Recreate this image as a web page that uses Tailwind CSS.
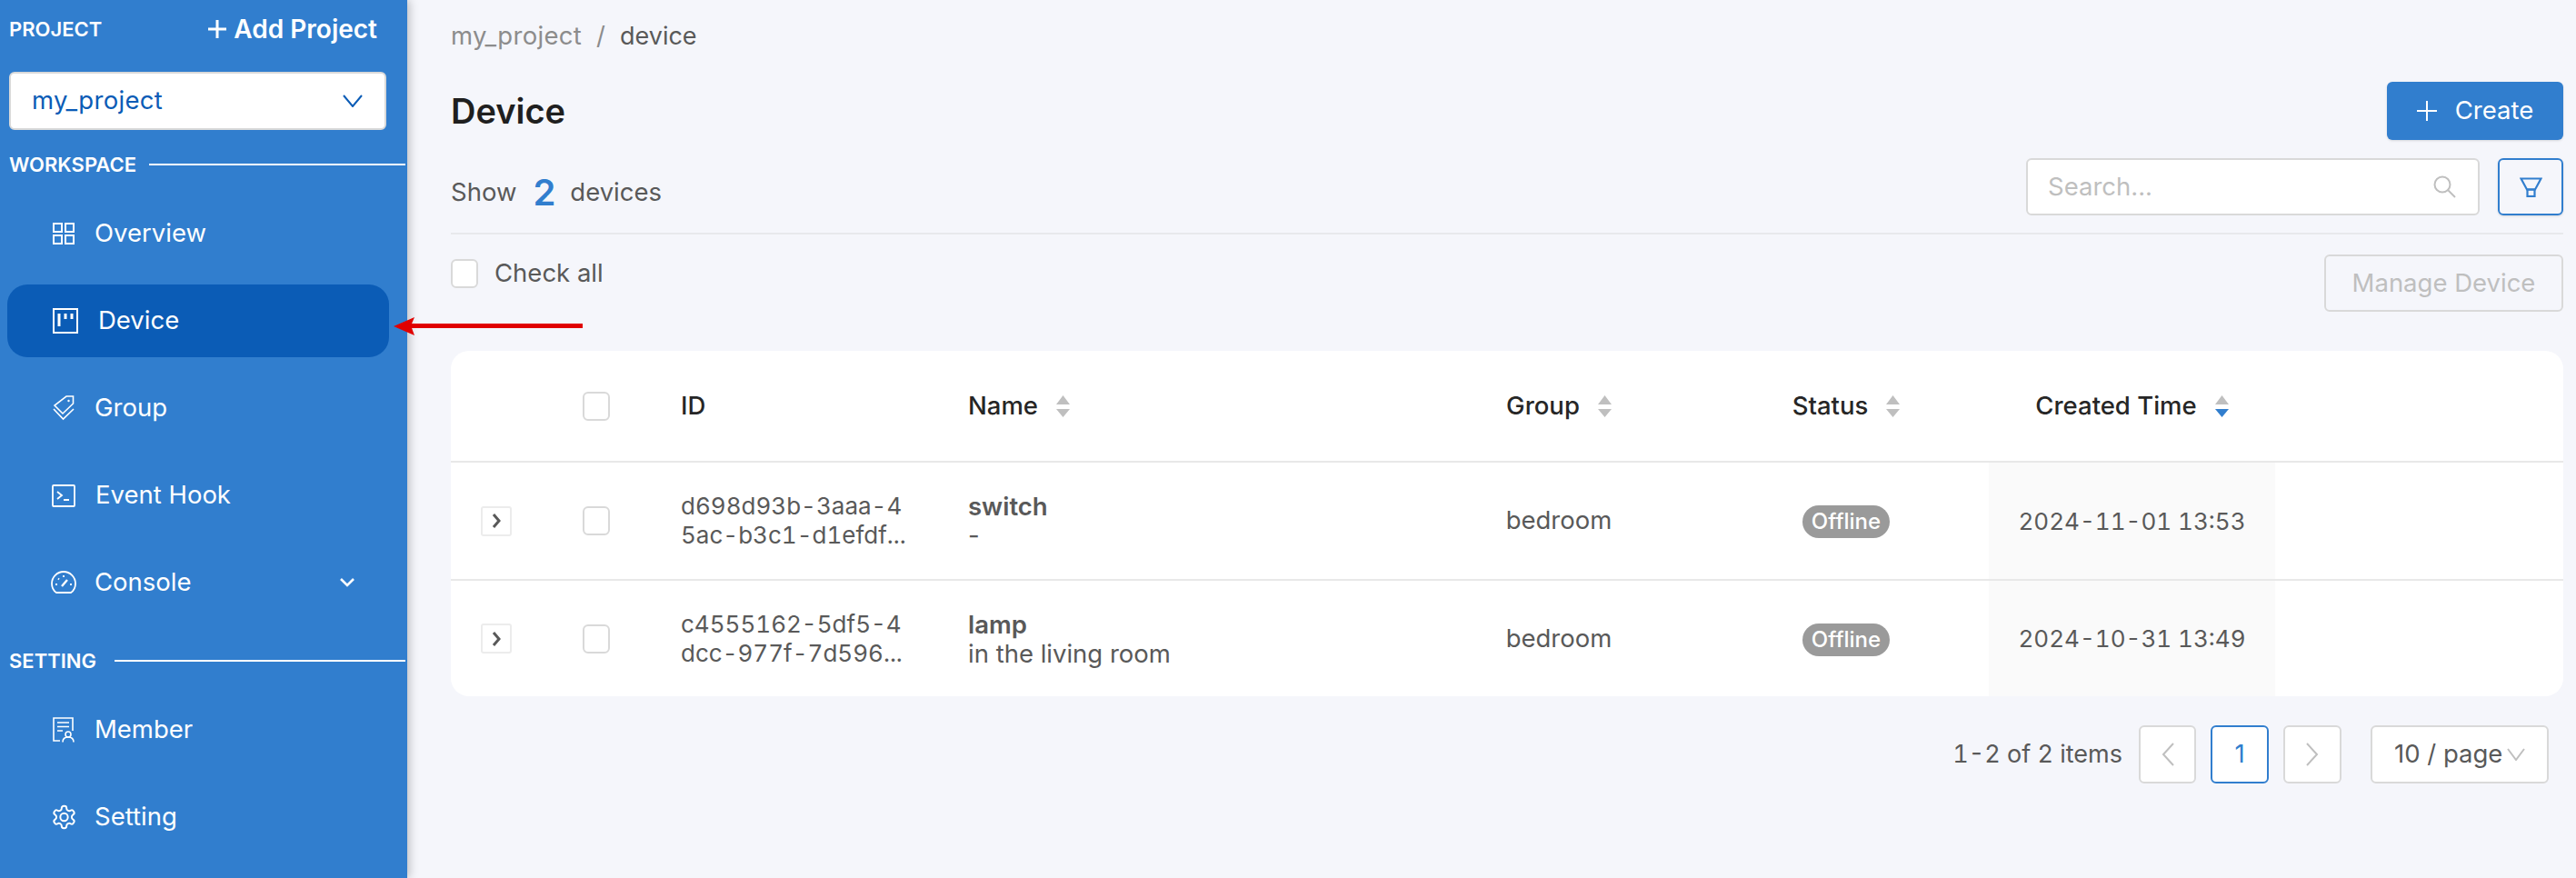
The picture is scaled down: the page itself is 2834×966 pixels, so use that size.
<!DOCTYPE html>
<html lang="en">
  <head>
    <meta charset="UTF-8" />
    <title>Device</title>
    <script src="https://cdn.jsdelivr.net/npm/@tailwindcss/browser@4"></script>
  </head>
  <body class="font-['Inter',sans-serif] antialiased">
    <div class="relative flex w-[2834px] h-[966px] overflow-hidden bg-[#f5f6fb] text-[27.5px] text-[#595959]">
      <!-- Sidebar -->
      <aside class="w-[448px] shrink-0 bg-[#317ece] text-white shadow-[2px_0_10px_rgba(0,0,0,0.25)] z-10">
        <div class="h-[64px] pl-[10px] pr-[33px] flex items-center justify-between">
          <span class="text-[22px] font-semibold">PROJECT</span>
          <span class="flex items-center gap-[6px] text-[28px] font-semibold">
            <svg class="w-[24px] h-[24px]" viewBox="0 0 24 24" fill="none" stroke="currentColor" stroke-width="3"><path d="M12 2v20M2 12h20" /></svg>
            Add Project
          </span>
        </div>
        <div class="mt-[15px] ml-[10px] w-[415px] h-[64px] bg-white border-2 border-[#d9d9d9] rounded-[6px] pl-[23px] pr-[24px] flex items-center justify-between text-[#0b5cb6]">
          <span class="tracking-[0.3px]">my_project</span>
          <svg class="w-[22px] h-[14px]" viewBox="0 0 22 14" fill="none" stroke="currentColor" stroke-width="2"><path d="M1 1l10 12L21 1" /></svg>
        </div>
        <div class="mt-[22px] pl-[10px] pr-[2px] flex items-center gap-[14px] h-[32px] text-[22px] font-semibold">
          <span>WORKSPACE</span>
          <div class="flex-1 h-[2px] bg-white"></div>
        </div>
        <nav class="mt-[12px]">
          <a class="h-[96px] pl-[58px] flex items-center gap-[22px]">
            <svg class="w-[24px] h-[24px]" viewBox="0 0 24 24" fill="none" stroke="currentColor" stroke-width="2"><rect x="1" y="1" width="9" height="9" /><rect x="14" y="1" width="9" height="9" /><rect x="1" y="14" width="9" height="9" /><rect x="14" y="14" width="9" height="9" /></svg>
            Overview
          </a>
          <a class="ml-[8px] mr-[20px] my-[8px] h-[80px] pl-[50px] flex items-center gap-[22px] bg-[#0b5cb6] rounded-[22px]">
            <svg class="w-[28px] h-[28px]" viewBox="0 0 28 28" fill="none" stroke="currentColor" stroke-width="2"><rect x="1" y="1" width="26" height="26" /><path d="M7 6v14M14 6v6M21 6v6" stroke-width="3" /></svg>
            Device
          </a>
          <a class="h-[96px] pl-[58px] flex items-center gap-[22px]">
            <svg class="w-[24px] h-[28px]" viewBox="0 0 24 28" fill="none" stroke="currentColor" stroke-width="1.6"><path d="M15 1h7.5v8L11 20 2 11z" /><circle cx="17.5" cy="6" r="1.2" fill="currentColor" stroke="none" /><path d="M1 15l10.5 11L23 15" /></svg>
            Group
          </a>
          <a class="h-[96px] pl-[57px] flex items-center gap-[22px]">
            <svg class="w-[26px] h-[25px]" viewBox="0 0 26 25" fill="none" stroke="currentColor" stroke-width="1.8"><rect x="1" y="1" width="24" height="23" rx="1" /><path d="M6 8l5 4-5 4M13 17h6" /></svg>
            Event Hook
          </a>
          <a class="h-[96px] pl-[56px] pr-[58px] flex items-center gap-[20px]">
            <svg class="w-[28px] h-[26px]" viewBox="0 0 28 26" fill="none" stroke="currentColor" stroke-width="1.8"><path d="M6 24h16c3-2 5-6 5-10A13 13 0 0 0 1 14c0 4 2 8 5 10z" /><path d="M12 17l6-7" stroke-width="2.4" /><path d="M5 15h2M21 15h2M8 8.5l1 1M14 5v2" stroke-width="1.8" /></svg>
            <span class="flex-1">Console</span>
            <svg class="w-[16px] h-[10px]" viewBox="0 0 16 10" fill="none" stroke="currentColor" stroke-width="2.6"><path d="M1 1l7 7 7-7" /></svg>
          </a>
        </nav>
        <div class="mt-[22px] pl-[10px] pr-[2px] flex items-center gap-[20px] h-[32px] text-[22px] font-semibold">
          <span>SETTING</span>
          <div class="flex-1 h-[2px] bg-white"></div>
        </div>
        <nav class="mt-[12px]">
          <a class="h-[96px] pl-[58px] flex items-center gap-[22px]">
            <svg class="w-[24px] h-[28px]" viewBox="0 0 24 28" fill="none" stroke="currentColor" stroke-width="1.6"><path d="M8 26H1V1h21v14" /><path d="M5 6h13M5 10.5h13M5 15h6" /><circle cx="17" cy="19" r="3" /><path d="M11 27.5c0-4 3-5.500 6-5.500s6 1.500 6 5.500" /></svg>
            Member
          </a>
          <a class="h-[96px] pl-[57px] flex items-center gap-[20px]">
            <svg class="w-[27px] h-[28px]" viewBox="1 1 22 22" fill="none" stroke="currentColor" stroke-width="1.6"><circle cx="12" cy="12" r="3.4" /><path d="M12.22 2h-.44a2 2 0 0 0-2 2v.18a2 2 0 0 1-1 1.73l-.43.25a2 2 0 0 1-2 0l-.15-.08a2 2 0 0 0-2.73.73l-.22.38a2 2 0 0 0 .73 2.73l.15.1a2 2 0 0 1 1 1.72v.51a2 2 0 0 1-1 1.74l-.15.09a2 2 0 0 0-.73 2.73l.22.38a2 2 0 0 0 2.73.73l.15-.08a2 2 0 0 1 2 0l.43.25a2 2 0 0 1 1 1.73V20a2 2 0 0 0 2 2h.44a2 2 0 0 0 2-2v-.18a2 2 0 0 1 1-1.73l.43-.25a2 2 0 0 1 2 0l.15.08a2 2 0 0 0 2.73-.73l.22-.39a2 2 0 0 0-.73-2.73l-.15-.08a2 2 0 0 1-1-1.74v-.5a2 2 0 0 1 1-1.74l.15-.09a2 2 0 0 0 .73-2.73l-.22-.38a2 2 0 0 0-2.73-.73l-.15.08a2 2 0 0 1-2 0l-.43-.25a2 2 0 0 1-1-1.73V4a2 2 0 0 0-2-2z" /></svg>
            Setting
          </a>
        </nav>
      </aside>

      <!-- Main -->
      <main class="flex-1 pl-[48px] pr-[14px]">
        <div class="h-[80px] flex items-center gap-[16px]">
          <span class="text-[#8c8c8c] tracking-[0.3px]">my_project</span>
          <span class="text-[#8c8c8c]">/</span>
          <span class="text-[27px]">device</span>
        </div>
        <div class="h-[84px] flex items-center justify-between">
          <h1 class="text-[38px] font-semibold text-[#1f1f1f]">Device</h1>
          <button class="w-[194px] h-[64px] bg-[#317ece] text-white rounded-[6px] shadow-sm flex items-center justify-center gap-[20px]">
            <svg class="w-[22px] h-[22px]" viewBox="0 0 22 22" fill="none" stroke="currentColor" stroke-width="2"><path d="M11 0v22M0 11h22" /></svg>
            Create
          </button>
        </div>
        <div class="h-[94px] border-b-2 border-[#e8e9ec] flex items-start justify-between">
          <div class="mt-[16px] h-[63px] flex items-center">
            <span>Show</span>
            <span class="ml-[18px] mr-[16px] text-[40px] font-semibold text-[#317ece]">2</span>
            <span>devices</span>
          </div>
          <div class="mt-[10px] flex gap-[20px]">
            <div class="w-[499px] h-[63px] bg-white border-2 border-[#d9d9d9] rounded-[6px] pl-[22px] pr-[24px] flex items-center justify-between text-[#bfbfbf]">
              <span>Search...</span>
              <svg class="w-[25px] h-[25px]" viewBox="0 0 25 25" fill="none" stroke="currentColor" stroke-width="2"><circle cx="10" cy="10" r="8.5" /><path d="M16 16l8 8" /></svg>
            </div>
            <button class="w-[72px] h-[63px] border-2 border-[#317ece] rounded-[6px] shadow-sm flex items-center justify-center text-[#317ece]">
              <svg class="w-[25px] h-[22px]" viewBox="0 0 25 22" fill="none" stroke="currentColor" stroke-width="2.2"><path d="M1.500 1.500h22l-6.500 12H8z" /><rect x="8.500" y="13.500" width="8" height="7.500" /></svg>
            </button>
          </div>
        </div>
        <div class="h-[128px] flex items-start justify-between">
          <label class="mt-[27px] h-[32px] flex items-center gap-[18px]">
            <span class="w-[30px] h-[32px] bg-white border-2 border-[#d9d9d9] rounded-[6px]"></span>
            <span>Check all</span>
          </label>
          <button class="mt-[22px] w-[263px] h-[63px] border-2 border-[#d9d9d9] rounded-[6px] text-[#bfbfbf]">Manage Device</button>
        </div>

        <!-- Table -->
        <div class="h-[380px] bg-white rounded-[20px] overflow-hidden">
          <table class="w-full table-fixed border-collapse">
            <thead>
              <tr class="h-[122px] border-b-2 border-[#e8e8e8] text-[#262626]">
                <th class="w-[112px]"></th>
                <th class="w-[108px] pl-[33px] font-medium text-left"><span class="block w-[30px] h-[32px] border-2 border-[#d9d9d9] rounded-[6px]"></span></th>
                <th class="w-[316px] pl-[33px] font-medium text-left">ID</th>
                <th class="w-[524px] pl-[33px] font-medium text-left">
                  <span class="inline-flex items-center gap-[20px]">Name
                    <svg class="w-[15px] h-[24px]" viewBox="0 0 15 24" fill="#bfbfbf"><path d="M7.500 0L15 10H0zM0 15h15L7.500 24z" /></svg>
                  </span>
                </th>
                <th class="w-[318px] font-medium">
                  <span class="inline-flex items-center gap-[20px]">Group
                    <svg class="w-[15px] h-[24px]" viewBox="0 0 15 24" fill="#bfbfbf"><path d="M7.500 0L15 10H0zM0 15h15L7.500 24z" /></svg>
                  </span>
                </th>
                <th class="w-[314px] font-medium">
                  <span class="inline-flex items-center gap-[20px]">Status
                    <svg class="w-[15px] h-[24px]" viewBox="0 0 15 24" fill="#bfbfbf"><path d="M7.500 0L15 10H0zM0 15h15L7.500 24z" /></svg>
                  </span>
                </th>
                <th class="w-[315px] font-medium">
                  <span class="inline-flex items-center gap-[20px]">Created Time
                    <svg class="w-[15px] h-[24px]" viewBox="0 0 15 24"><path fill="#bfbfbf" d="M7.500 0L15 10H0z" /><path fill="#317ece" d="M0 15h15L7.500 24z" /></svg>
                  </span>
                </th>
                <th></th>
              </tr>
            </thead>
            <tbody>
              <tr class="h-[130px] border-b-2 border-[#e8e8e8]">
                <td class="pl-[33px]">
                  <span class="w-[34px] h-[33px] border-2 border-[#ececec] rounded-[3px] flex items-center justify-center">
                    <svg class="w-[10px] h-[16px]" viewBox="0 0 10 16" fill="none" stroke="#595959" stroke-width="3"><path d="M2 1l6 7-6 7" /></svg>
                  </span>
                </td>
                <td class="pl-[33px]"><span class="block w-[30px] h-[32px] border-2 border-[#d9d9d9] rounded-[6px]"></span></td>
                <td class="pl-[33px] leading-[32px] text-[26px] tabular-nums">d698d93b-3aaa-4<br />5ac-b3c1-d1efdf...</td>
                <td class="pl-[33px] leading-[32px]"><div class="font-semibold">switch</div><div>-</div></td>
                <td class="text-center">bedroom</td>
                <td class="text-center"><span class="inline-block w-[96px] h-[36px] leading-[36px] rounded-full bg-[#9a9a9a] text-white text-[24px] font-medium">Offline</span></td>
                <td class="text-center bg-[#fafafa] text-[26px] tabular-nums">2024-11-01 13:53</td>
                <td></td>
              </tr>
              <tr class="h-[128px]">
                <td class="pl-[33px]">
                  <span class="w-[34px] h-[33px] border-2 border-[#ececec] rounded-[3px] flex items-center justify-center">
                    <svg class="w-[10px] h-[16px]" viewBox="0 0 10 16" fill="none" stroke="#595959" stroke-width="3"><path d="M2 1l6 7-6 7" /></svg>
                  </span>
                </td>
                <td class="pl-[33px]"><span class="block w-[30px] h-[32px] border-2 border-[#d9d9d9] rounded-[6px]"></span></td>
                <td class="pl-[33px] leading-[32px] text-[26px] tabular-nums">c4555162-5df5-4<br />dcc-977f-7d596...</td>
                <td class="pl-[33px] leading-[32px]"><div class="font-semibold">lamp</div><div>in the living room</div></td>
                <td class="text-center">bedroom</td>
                <td class="text-center"><span class="inline-block w-[96px] h-[36px] leading-[36px] rounded-full bg-[#9a9a9a] text-white text-[24px] font-medium">Offline</span></td>
                <td class="text-center bg-[#fafafa] text-[26px] tabular-nums">2024-10-31 13:49</td>
                <td></td>
              </tr>
            </tbody>
          </table>
        </div>

        <!-- Pagination -->
        <div class="mt-[32px] pr-[16px] flex items-center justify-end">
          <span class="mr-[18px] text-[27px] tabular-nums">1-2 of 2 items</span>
          <span class="w-[63px] h-[64px] bg-white border-2 border-[#d9d9d9] rounded-[6px] flex items-center justify-center">
            <svg class="w-[14px] h-[26px]" viewBox="0 0 14 26" fill="none" stroke="#bfbfbf" stroke-width="2"><path d="M13 1L2 13l11 12" /></svg>
          </span>
          <span class="ml-[16px] w-[64px] h-[64px] bg-white border-2 border-[#317ece] rounded-[6px] flex items-center justify-center text-[#317ece]">1</span>
          <span class="ml-[16px] w-[64px] h-[64px] bg-white border-2 border-[#d9d9d9] rounded-[6px] flex items-center justify-center">
            <svg class="w-[14px] h-[26px]" viewBox="0 0 14 26" fill="none" stroke="#bfbfbf" stroke-width="2"><path d="M1 1l11 12L1 25" /></svg>
          </span>
          <span class="ml-[32px] w-[196px] h-[64px] bg-white border-2 border-[#d9d9d9] rounded-[6px] pl-[24px] flex items-center gap-[5px]">
            10 / page
            <svg class="w-[20px] h-[14px]" viewBox="0 0 20 14" fill="none" stroke="#bfbfbf" stroke-width="2"><path d="M1 1l9 12 9-12" /></svg>
          </span>
        </div>
      </main>

      <!-- Red annotation arrow -->
      <svg class="absolute left-[430px] top-[345px] w-[215px] h-[28px] z-20" viewBox="0 0 215 28"><path d="M3 14L26 4l-3 7h188v5H23l3 8z" fill="#e00000" /></svg>
    </div>
  </body>
</html>
